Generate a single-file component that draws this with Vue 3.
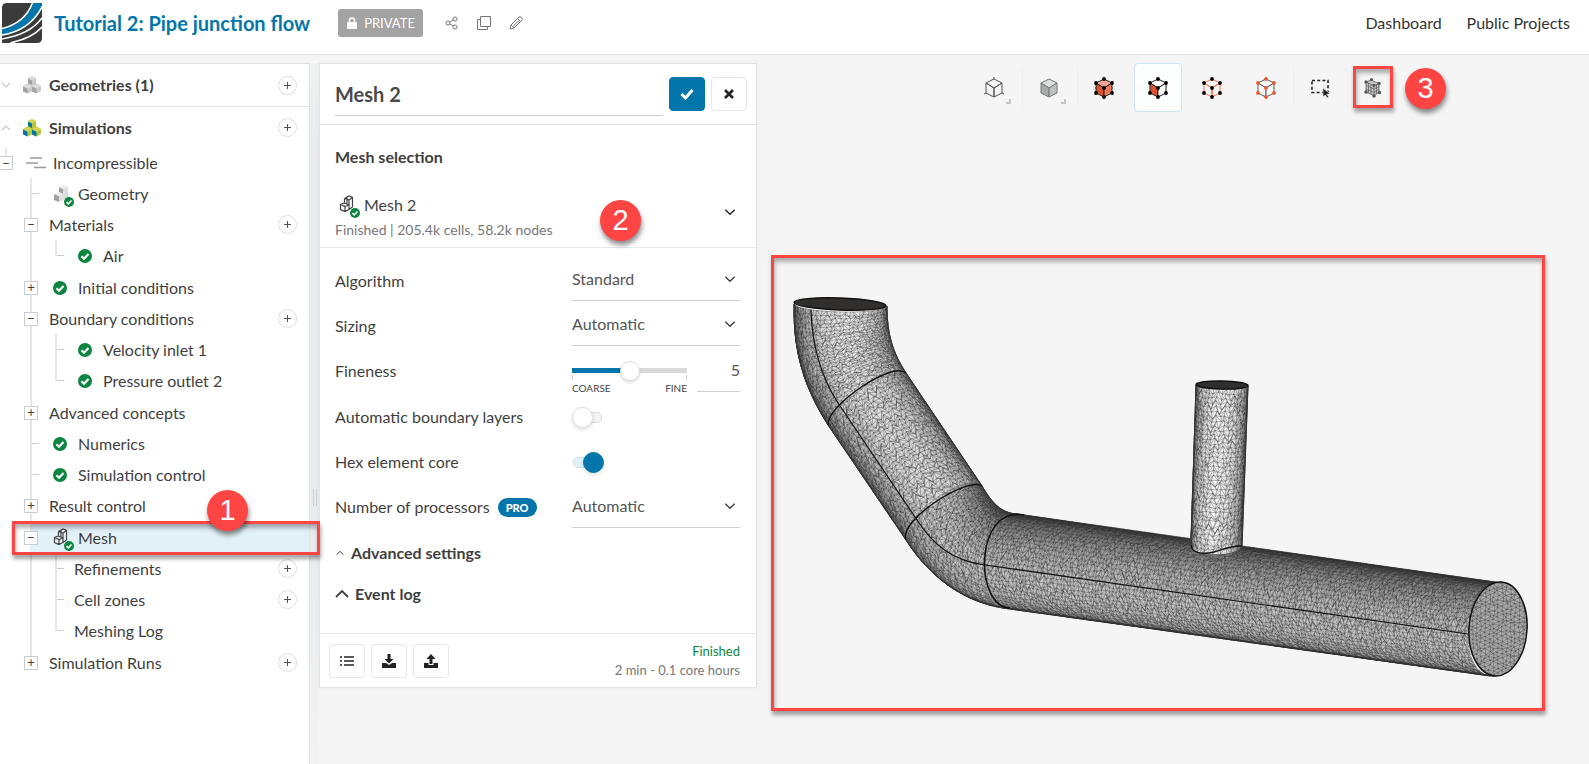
<script setup>
import { ref } from 'vue'

const fineness = ref(5)
const meshName = ref('Mesh 2')
const boundaryLayers = ref(false)
const hexCore = ref(true)

const tree = [
  { label: 'Geometry', icon: 'solid' },
  {
    label: 'Materials', box: '-', add: true,
    children: [{ label: 'Air', icon: 'check' }],
  },
  { label: 'Initial conditions', box: '+', icon: 'check' },
  {
    label: 'Boundary conditions', box: '-', add: true,
    children: [
      { label: 'Velocity inlet 1', icon: 'check' },
      { label: 'Pressure outlet 2', icon: 'check' },
    ],
  },
  { label: 'Advanced concepts', box: '+' },
  { label: 'Numerics', icon: 'check' },
  { label: 'Simulation control', icon: 'check' },
  { label: 'Result control', box: '+' },
  {
    label: 'Mesh', box: '-', icon: 'mesh', active: true,
    children: [
      { label: 'Refinements', add: true },
      { label: 'Cell zones', add: true },
      { label: 'Meshing Log' },
    ],
  },
  { label: 'Simulation Runs', box: '+', add: true },
]

const tools = [
  { id: 'view', label: 'View cube', corner: true },
  { id: 'solid', label: 'Render mode', corner: true, sep: true, wide: true },
  { id: 'volumes', label: 'Select volumes', sep: true, wide: true },
  { id: 'faces', label: 'Select faces', active: true },
  { id: 'edges', label: 'Select edges' },
  { id: 'nodes', label: 'Select vertices' },
  { id: 'box', label: 'Box selection', sep: true },
  { id: 'clip', label: 'Mesh clip', sep: true, marked: true },
]
const corners = [[12, 3], [4, 7], [20, 7], [12, 12], [4, 17], [20, 17], [12, 21]]

/* Surface mesh of the pipe: every segment is swept between an outer and an inner silhouette curve. */
let seed = 7
const rand = () => {
  seed = (seed * 16807) % 2147483647
  return seed / 2147483647 - 0.5
}
const bez = (p, t) => {
  const s = 1 - t
  const w = [s * s * s, 3 * s * s * t, 3 * s * t * t, t * t * t]
  return [0, 1].map((k) => p.reduce((a, q, i) => a + w[i] * q[k], 0))
}
const line = (a, b) => [0, 1, 2, 3].map((i) => [a[0] + ((b[0] - a[0]) * i) / 3, a[1] + ((b[1] - a[1]) * i) / 3])
const point = (s, u, v) => {
  const o = bez(s.outer, u)
  const i = bez(s.inner, u)
  const c = Math.cos(v * Math.PI)
  const h = Math.sin(v * Math.PI)
  return [0, 1].map((k) => (o[k] + i[k]) / 2 + ((o[k] - i[k]) / 2) * c + h * (s.b0[k] + (s.b1[k] - s.b0[k]) * u))
}
const fmt = (p) => p[0].toFixed(1) + ' ' + p[1].toFixed(1)

/* `across` staggers the lattice around the pipe instead of along it. */
const segments = [
  { outer: [[794, 304], [793, 355], [806, 390], [828, 425]], inner: [[887, 306], [887, 335], [893, 353], [906, 373]], b0: [0, 7], b1: [-8, -13], nu: 26, nv: 30, light: 236, peak: 0.55 },
  { outer: line([828, 425], [906, 540]), inner: line([906, 373], [982, 486]), b0: [-8, -13], b1: [-9, -14], nu: 32, nv: 30, light: 222, peak: 0.52 },
  { outer: [[906, 540], [930, 578], [965, 602], [1007, 608]], inner: [[982, 486], [992, 503], [1001, 513], [1017, 514]], b0: [-9, -14], b1: [-27, 4], nu: 24, nv: 32, light: 200, peak: 0.48, across: true },
  { outer: line([1007, 608], [1494, 676]), inner: line([1017, 514], [1502, 583]), b0: [-27, 4], b1: [-29, 3], nu: 140, nv: 32, light: 196, peak: 0.42, across: true },
]
const branch = { outer: line([1196, 385], [1191, 544]), inner: line([1248, 386], [1242, 546]), b0: [0, 4], b1: [-4, 9], nu: 36, nv: 18, light: 244, peak: 0.5 }

function build(s) {
  const strips = []
  const n = 20
  for (let k = 0; k < n; k++) {
    const pts = []
    for (let i = 0; i <= 16; i++) pts.push(fmt(point(s, i / 16, k / n)))
    for (let i = 16; i >= 0; i--) pts.push(fmt(point(s, i / 16, (k + 1) / n)))
    const d = Math.abs((k + 0.5) / n - s.peak) * 2
    const g = Math.round(s.light - Math.pow(d, 1.8) * (s.light - 80))
    strips.push({ d: 'M' + pts.join('L') + 'Z', fill: `rgb(${g},${g},${g})` })
  }
  const grid = []
  for (let i = 0; i <= s.nu; i++) {
    const row = []
    for (let j = 0; j <= s.nv; j++) {
      const edgeU = i === 0 || i === s.nu
      const edgeV = j === 0 || j === s.nv
      const stagger = (s.across ? i : j) % 2 ? 0.25 : -0.25
      const u = (i + (edgeU ? 0 : rand() * 0.7 + (s.across ? 0 : stagger))) / s.nu
      const v = (j + (edgeV ? 0 : rand() * 0.7 + (s.across ? stagger : 0))) / s.nv
      row.push(fmt(point(s, u, v)))
    }
    grid.push(row)
  }
  let wires = ''
  for (let i = 0; i < s.nu; i++) {
    for (let j = 0; j <= s.nv; j++) {
      wires += `M${grid[i][j]}L${grid[i + 1][j]}`
      if (j < s.nv) {
        wires += `M${grid[i][j]}L${grid[i][j + 1]}`
        const odd = (s.across ? i : j) % 2
        wires += odd ? `M${grid[i + 1][j]}L${grid[i][j + 1]}` : `M${grid[i][j]}L${grid[i + 1][j + 1]}`
      }
    }
  }
  return { strips, wires }
}
const pipe = segments.map(build)
const riser = build(branch)

/* Triangulated disc that closes the end of the main pipe. */
let capWires = ''
{
  const cols = 16
  const rows = 24
  const g = []
  for (let i = 0; i <= rows; i++) {
    const r = []
    for (let j = 0; j <= cols; j++) {
      r.push(fmt([1464 + ((j + rand() * 0.6) * 68) / cols, 578 + ((i + rand() * 0.6 + (j % 2 ? 0.5 : 0)) * 104) / rows]))
    }
    g.push(r)
  }
  for (let i = 0; i < rows; i++) {
    for (let j = 0; j < cols; j++) {
      capWires += `M${g[i][j]}L${g[i + 1][j]}M${g[i][j]}L${g[i][j + 1]}`
      capWires += j % 2 ? `M${g[i][j]}L${g[i + 1][j + 1]}` : `M${g[i + 1][j]}L${g[i][j + 1]}`
    }
  }
}
</script>

<template>
  <div class="app">
    <header class="topbar">
      <svg class="logo" viewBox="0 0 40 40" aria-hidden="true">
        <defs><clipPath id="logo-clip"><path d="M5 0H40V35Q40 40 35 40H0V5Q0 0 5 0Z" /></clipPath></defs>
        <g clip-path="url(#logo-clip)">
          <rect width="40" height="40" fill="#3b3b3b" />
          <path d="M0 26C15 22 25 14 31 0H40V4C32 20 18 30 0 33Z" fill="#0276ab" />
          <path d="M0 25.500C15 22 25 14 30.500 0M0 32C18 29 32 20 40.500 3M0 36C18 33 32 26 40 15M8 40C22 37 33 32 40 24" fill="none" stroke="#fff" stroke-width="1.600" />
        </g>
      </svg>
      <h1>Tutorial 2: Pipe junction flow</h1>
      <span class="private">
        <svg width="10" height="12" viewBox="0 0 10 12"><path d="M2.500 6V3.500a2.500 2.500 0 0 1 5 0V6" fill="none" stroke="#fff" stroke-width="1.600" /><rect y="5" width="10" height="7" rx="1" fill="#fff" /></svg>
        PRIVATE
      </span>
      <div class="actions">
        <button type="button" aria-label="Share"><svg width="14" height="14" viewBox="0 0 14 14"><g fill="none" stroke="#777"><circle cx="3" cy="7" r="2" /><circle cx="10" cy="3" r="2" /><circle cx="10" cy="11" r="2" /><path d="M5 6l3-2M5 8l3 2" /></g></svg></button>
        <button type="button" aria-label="Copy"><svg width="14" height="14" viewBox="0 0 14 14"><path d="M3.500.5h10v10h-10zM3.500 3.500h-3v10h10v-3" fill="none" stroke="#777" /></svg></button>
        <button type="button" aria-label="Rename"><svg width="14" height="14" viewBox="0 0 14 14"><path d="M1 13l1-4L10 1q1-.8 2 .2l.8.8q1 1 .2 2L5 12zM2 9l3 3M8.500 2.500l3 3M4 10.500l6-6" fill="none" stroke="#777" /></svg></button>
      </div>
      <nav>
        <a href="#dashboard">Dashboard</a>
        <a href="#projects">Public Projects</a>
      </nav>
    </header>

    <svg class="defs" aria-hidden="true">
      <symbol id="ok" viewBox="0 0 14 14"><circle cx="7" cy="7" r="7" fill="#0d8540" /><path d="M3.500 7.200l2.500 2.500 4.500-4.800" fill="none" stroke="#fff" stroke-width="2.200" /></symbol>
      <symbol id="chev" viewBox="0 0 12 12"><path d="M2 4l4 4 4-4" fill="none" stroke="currentColor" stroke-width="1.200" /></symbol>
      <symbol id="cubes" viewBox="0 0 18 18">
        <path d="M9 0l4 2v5l5 3v5l-4.500 2.500L9 15.500 4.500 17.500 0 15v-5l5-3V2z" fill="var(--r)" />
        <path d="M5 2.500l4 2V9L5 7zM0 10.500l4.500 2v5L0 15.500zM9 10.500l4.500 2v5L9 15.500z" fill="var(--l)" />
        <path d="M9 0l4 2-4 2.200L5 2zM4.500 8L9 10.200 4.500 12.500 0 10zM13.500 8l4.500 2-4.500 2.500L9 10.200z" fill="var(--t)" />
      </symbol>
      <symbol id="part" viewBox="0 0 22 22">
        <path d="M6 4l4-2 5 2v11l-9 4-5-2v-6l5-2z" fill="#dddede" />
        <path d="M6 4l4 2v5l-4-2zM1 11l5 2v6l-5-2z" fill="#a0a2a4" />
        <path d="M6 4l4-2 5 2-5 2zM1 11l5-2 4 2-4 2z" fill="#efefef" />
      </symbol>
      <symbol id="wire" viewBox="0 0 22 22">
        <path d="M5.500 4.500L10 2l3.500 1.500V13M5.500 4.500L10 6l3.500-2.500M5.500 4.500V9L1.500 10.500v5L6 17.500l4-2V11L6 12.500l-4.500-2M6 12.500v5M10 6v5L5.500 9M13.500 13L10 15.500M8 3.500v7" fill="none" stroke="#444" stroke-width="1.200" />
      </symbol>
    </svg>

    <main>
      <aside class="sidebar">
        <div class="group geometries">
          <svg class="fold" width="12" height="12"><use href="#chev" /></svg>
          <svg class="cubes gray" width="18" height="18"><use href="#cubes" /></svg>
          <h2>Geometries (1)</h2>
          <button type="button" class="add" aria-label="Add geometry"></button>
        </div>
        <div class="group">
          <svg class="fold up" width="12" height="12"><use href="#chev" /></svg>
          <svg class="cubes colour" width="18" height="18"><use href="#cubes" /></svg>
          <h2>Simulations</h2>
          <button type="button" class="add" aria-label="Add simulation"></button>
        </div>
        <div class="root">
          <button type="button" class="box" aria-label="Toggle Incompressible">−</button>
          <svg width="20" height="14" viewBox="0 0 20 14"><path d="M4 2h12M0 7h12M8 11.500h12" stroke="#999" stroke-width="1.400" /></svg>
          <span>Incompressible</span>
        </div>
        <ul class="tree">
          <li v-for="n in tree" :key="n.label">
            <div class="row" :class="{ active: n.active }">
              <button v-if="n.box" type="button" class="box" :aria-label="'Toggle ' + n.label">{{ n.box === '-' ? '−' : '+' }}</button>
              <i v-else class="tick"></i>
              <span v-if="n.icon" class="icon">
                <svg v-if="n.icon === 'check'" width="14" height="14"><use href="#ok" /></svg>
                <template v-else>
                  <svg width="22" height="22"><use :href="n.icon === 'mesh' ? '#wire' : '#part'" /></svg>
                  <svg class="mini" width="10" height="10"><use href="#ok" /></svg>
                </template>
              </span>
              <span class="label">{{ n.label }}</span>
              <button v-if="n.add" type="button" class="add" :aria-label="'Add to ' + n.label"></button>
              <template v-if="n.active"><span class="outline"></span><span class="marker m1">1</span></template>
            </div>
            <ul v-if="n.children" class="children">
              <li v-for="c in n.children" :key="c.label" class="row">
                <i class="tick"></i>
                <span v-if="c.icon" class="icon"><svg width="14" height="14"><use href="#ok" /></svg></span>
                <span class="label">{{ c.label }}</span>
                <button v-if="c.add" type="button" class="add" :aria-label="'Add to ' + c.label"></button>
              </li>
            </ul>
          </li>
        </ul>
      </aside>

      <div class="gutter"><i class="grip"></i></div>

      <section class="panel">
        <div class="panel-head">
          <input v-model="meshName" class="name" aria-label="Mesh name" />
          <button type="button" class="btn primary" aria-label="Apply"><svg width="14" height="12" viewBox="0 0 14 12"><path d="M1.500 6l4 4 7-8" fill="none" stroke="#fff" stroke-width="3" /></svg></button>
          <button type="button" class="btn" aria-label="Close"><svg width="10" height="10" viewBox="0 0 10 10"><path d="M1 1l8 8M9 1L1 9" stroke="#222" stroke-width="2.600" /></svg></button>
        </div>
        <div class="selection">
          <h3>Mesh selection</h3>
          <button type="button" class="mesh-pick">
            <span class="pick-name">
              <span class="icon"><svg width="22" height="22"><use href="#wire" /></svg><svg class="mini" width="10" height="10"><use href="#ok" /></svg></span>
              Mesh 2
            </span>
            <small>Finished | 205.4k cells, 58.2k nodes</small>
            <svg class="pick-chev" width="14" height="14"><use href="#chev" /></svg>
          </button>
          <span class="marker m2">2</span>
        </div>
        <form class="form" @submit.prevent>
          <div class="field">
            <label for="algorithm">Algorithm</label>
            <span class="select"><select id="algorithm"><option>Standard</option></select><svg width="14" height="14"><use href="#chev" /></svg></span>
          </div>
          <div class="field">
            <label for="sizing">Sizing</label>
            <span class="select"><select id="sizing"><option>Automatic</option></select><svg width="14" height="14"><use href="#chev" /></svg></span>
          </div>
          <div class="field tall">
            <label for="fineness">Fineness</label>
            <span class="fine">
              <span class="slider">
                <input id="fineness" v-model="fineness" type="range" min="0" max="10" />
                <span class="ends"><span>COARSE</span><span>FINE</span></span>
              </span>
              <input v-model="fineness" class="value" aria-label="Fineness value" />
            </span>
          </div>
          <div class="field">
            <label for="layers">Automatic boundary layers</label>
            <input id="layers" v-model="boundaryLayers" type="checkbox" class="switch" />
          </div>
          <div class="field">
            <label for="hex">Hex element core</label>
            <input id="hex" v-model="hexCore" type="checkbox" class="switch" />
          </div>
          <div class="field tall">
            <label for="procs">Number of processors <b class="pro">PRO</b></label>
            <span class="select"><select id="procs"><option>Automatic</option></select><svg width="14" height="14"><use href="#chev" /></svg></span>
          </div>
          <button type="button" class="section"><svg class="up" width="10" height="12"><use href="#chev" /></svg>Advanced settings</button>
          <button type="button" class="section log"><svg class="up" width="18" height="18"><use href="#chev" /></svg>Event log</button>
        </form>
        <footer>
          <button type="button" class="btn" aria-label="Event list"><svg width="14" height="12" viewBox="0 0 14 12"><path d="M0 2h2M4 2h10M0 6h2M4 6h10M0 10h2M4 10h10" stroke="#222" stroke-width="1.700" /></svg></button>
          <button type="button" class="btn" aria-label="Download"><svg width="14" height="14" viewBox="0 0 14 14"><path d="M0 9h4l3 2 3-2h4v5H0z" fill="#222" /><path d="M5.500 0h3v5h3L7 9.500 2.500 5h3z" fill="#222" /></svg></button>
          <button type="button" class="btn" aria-label="Upload"><svg width="14" height="14" viewBox="0 0 14 14"><path d="M0 9h4.500v2h5V9H14v5H0z" fill="#222" /><path d="M5.500 10h3V5h3L7 0 2.500 5h3z" fill="#222" /></svg></button>
          <p><span class="done">Finished</span><span>2 min - 0.1 core hours</span></p>
        </footer>
      </section>

      <section class="viewer">
        <div class="toolbar">
          <button v-for="t in tools" :key="t.id" type="button" :aria-label="t.label" :class="{ on: t.active, sep: t.sep, wide: t.wide }">
            <svg v-if="t.id === 'box'" width="24" height="24" viewBox="0 0 24 24">
              <path d="M4 4.500h16v12H4z" fill="none" stroke="#222" stroke-width="1.600" stroke-dasharray="3 2.200" />
              <path d="M15 12v9l2.300-2 1.700 3 1.600-.8-1.600-3 3-.4z" fill="#222" stroke="#f5f5f5" stroke-width=".6" />
            </svg>
            <svg v-else-if="t.id === 'clip'" width="24" height="24" viewBox="0 0 24 24">
              <path d="M4 6l5-2 8 4v8l-5 4-8-4z" fill="#c4c4c4" />
              <path d="M4 6l8 3.500 5-2M12 9.500V20M4 6v10l8 4 5-4V7.500L9 4zM4 9.500l8 3.500 5-2.500M4 13l8 3.500 5-3.500M6.500 7v10M9 8.200V18.500M14.500 8.500v9.500" fill="none" stroke="#666" stroke-width=".8" />
              <g fill="#555"><circle cx="4" cy="6" r="1.700" /><circle cx="9.500" cy="3.500" r="1.500" /><circle cx="17" cy="7.500" r="1.700" /><circle cx="4" cy="16" r="1.700" /><circle cx="12" cy="20" r="1.700" /><circle cx="17.500" cy="16.500" r="1.700" /><circle cx="12" cy="9.500" r="1.400" /></g>
            </svg>
            <svg v-else width="24" height="24" viewBox="0 0 24 24" :class="['cube', t.id]">
              <path class="top" d="M12 3l8 4-8 5-8-5z" />
              <path class="left" d="M4 7l8 5v9l-8-4z" />
              <path class="right" d="M20 7l-8 5v9l8-4z" />
              <path v-if="t.id === 'view'" d="M12 3V1M4 17l-2 1M20 17l2 1" />
              <g v-if="['volumes', 'faces', 'edges', 'nodes'].includes(t.id)"><circle v-for="(c, i) in corners" :key="i" :cx="c[0]" :cy="c[1]" r="1.900" /></g>
            </svg>
            <i v-if="t.corner" class="corner"></i>
            <template v-if="t.marked"><span class="outline"></span><span class="marker m3">3</span></template>
          </button>
        </div>
        <figure class="model">
          <svg viewBox="774 258 768 450" role="img" aria-label="Pipe junction mesh">
            <defs><clipPath id="cap"><ellipse cx="1498" cy="629" rx="29" ry="47" transform="rotate(4 1498 629)" /></clipPath></defs>
            <g v-for="(s, i) in pipe" :key="i">
              <path v-for="(p, k) in s.strips" :key="k" :d="p.d" :fill="p.fill" :stroke="p.fill" stroke-width=".5" />
              <path :d="s.wires" class="wires" />
            </g>
            <path v-for="(p, k) in riser.strips" :key="k" :d="p.d" :fill="p.fill" :stroke="p.fill" stroke-width=".5" />
            <path :d="riser.wires" class="wires" />
            <g clip-path="url(#cap)"><rect x="1460" y="575" width="75" height="110" fill="#acacac" /><path :d="capWires" class="wires" /></g>
            <g class="feature">
              <path d="M794 304C793 355 806 390 828 425L906 540C930 578 965 602 1007 608L1494 676M887 306C887 335 893 353 906 373L982 486C992 503 1001 513 1017 514L1192 540M1242 547L1502 583" stroke-width="1" class="rim" />
              <path d="M1196 385L1191 545M1248 386L1242 546" class="rim" />
              <path d="M811 310C812 345 820 375 838 403L915 517C934 547 954 561 985 565L1468 634" class="seam" />
              <path d="M828 425C826 406 893 360 906 373M906 540C898 520 968 476 982 486M1024 515C974 505 974 607 1010 608M1191 545C1192 553 1202 555 1214 552C1225 549 1232 545 1242 546" />
              <ellipse cx="1498" cy="629" rx="29" ry="47" transform="rotate(4 1498 629)" />
              <ellipse cx="840" cy="304" rx="46" ry="6" transform="rotate(2 840 304)" fill="#302f2e" />
              <ellipse cx="1222" cy="385" rx="26" ry="4" transform="rotate(1 1222 385)" fill="#302f2e" />
            </g>
          </svg>
        </figure>
      </section>
    </main>
  </div>
</template>

<style>
body { margin: 0; background: #f5f5f5; }
</style>

<style scoped>
* { box-sizing: border-box; }
.app { min-height: 100vh; display: flex; flex-direction: column; font: 16px/20px Lato, "Open Sans", sans-serif; color: #3f3f3f; background: #f5f5f5; overflow: hidden; }
button { font: inherit; color: inherit; padding: 0; border: 0; background: none; cursor: pointer; }
input, select { font: inherit; color: inherit; margin: 0; }
svg { display: block; flex: none; }
.defs { position: absolute; width: 0; height: 0; }
h1, h2, h3, p, ul, figure { margin: 0; padding: 0; list-style: none; }

.topbar { height: 55px; flex: none; display: flex; align-items: center; padding: 0 19px 8px 2px; background: #fff; border-bottom: 1px solid #e1e2e3; }
.logo { width: 40px; height: 40px; }
h1 { margin-left: 12px; font-size: 20px; line-height: 26px; font-weight: 700; color: #0276ab; white-space: nowrap; }
.private { margin-left: 28px; height: 28px; padding: 0 8px 0 9px; display: flex; align-items: center; gap: 7px; border-radius: 3px; background: #a3a3a3; color: #fff; font-size: 13px; }
.actions { display: flex; gap: 18px; margin-left: 22px; }
nav { margin-left: auto; display: flex; gap: 25px; }
nav a { color: #333; text-decoration: none; }

main { flex: 1; display: flex; align-items: flex-start; padding-top: 8px; }
.sidebar { width: 310px; flex: none; align-self: stretch; background: #fff; border: 1px solid #e0e2e3; border-width: 1px 1px 0 0; }
.group { display: flex; align-items: center; height: 41px; padding-right: 12px; }
.geometries { border-bottom: 1px solid #e3e4e5; height: 43px; }
.group h2 { flex: 1; font-size: 16px; line-height: 20px; font-weight: 700; }
.fold { color: #c4c6c8; }
.up { transform: rotate(180deg); }
.cubes { margin: 0 8px 0 11px; }
.gray { --t: #dededf; --l: #a2a4a6; --r: #c9cacc; }
.colour { --t: #d3d65a; --l: #0276ab; --r: #b9c63a; }
.add { position: relative; width: 19px; height: 19px; flex: none; border: 1px solid #dcdedf; border-radius: 50%; background: #fff; }
.add::before, .add::after { content: ""; position: absolute; left: 5px; top: 8px; width: 7px; height: 1px; background: #555; }
.add::after { left: 8px; top: 5px; width: 1px; height: 7px; }
.box { position: relative; width: 14px; height: 14px; flex: none; border: 1px solid #c8cdd0; background: #fff; font-size: 13px; line-height: 11px; text-align: center; }
.root { position: relative; display: flex; align-items: center; height: 30px; }
.root::before { content: ""; position: absolute; left: 5px; top: 0; width: 2px; height: 8px; background: #e4e6e7; }
.root .box { margin: 0 13px 0 -1px; }
.root span { margin-left: 7px; }
.tree { position: relative; }
.tree::before { content: ""; position: absolute; left: 30px; top: 0; bottom: 16px; width: 2px; background: #e4e6e7; }
.row { position: relative; display: flex; align-items: center; height: 31px; padding: 0 12px 0 24px; }
.row .box { margin-right: 1px; }
.tick { width: 15px; height: 1px; border-left: 8px solid transparent; background: #c8cdd0; background-clip: padding-box; }
.label { margin-left: 10px; flex: 1; }
.icon { position: relative; width: 25px; margin: 0 -10px 0 14px; }
.mini { position: absolute; left: 11px; top: 14px; }
.active { height: 32px; padding-top: 1px; background: linear-gradient(90deg, transparent 30px, #e2f1f8 30px); }
.children { position: relative; padding-bottom: 1px; }
.children::before { content: ""; position: absolute; left: 55px; top: 0; bottom: 16px; width: 2px; background: #e4e6e7; }
.children .row { padding-left: 49px; }

.outline { position: absolute; border: 3px solid #ff4444; box-shadow: 1px 4px 4px rgba(0, 0, 0, .35), inset 1px 4px 4px rgba(0, 0, 0, .3); }
.active .outline { left: 12px; right: -11px; top: 0; bottom: -2px; z-index: 2; }
.marker { position: absolute; z-index: 3; width: 41px; height: 41px; border-radius: 50%; background: #ff4444; color: #fff; font: 29px/41px "Liberation Sans", Arial, sans-serif; text-align: center; box-shadow: 1px 4px 5px rgba(0, 0, 0, .45); }
.m1 { left: 207px; top: -31px; }
.m2 { left: 280px; bottom: 6px; }
.m3 { left: 54px; top: 4px; }

.gutter { width: 9px; flex: none; align-self: stretch; background: linear-gradient(#f1f2f2, #e9ebed 80px, #e9ebed 480px, #f3f3f3); display: flex; justify-content: center; }
.grip { width: 4px; height: 17px; margin-top: 426px; border: 1px solid #cdd0d2; border-width: 0 1px; }

.panel { width: 438px; flex: none; background: #fff; border: 1px solid #e1e3e4; box-shadow: 0 0 6px rgba(0, 0, 0, .04); }
.panel-head { display: flex; gap: 6px; align-items: flex-start; height: 61px; padding: 13px 9px 0 15px; border-bottom: 1px solid #e1e3e4; }
.name { flex: 1; min-width: 0; height: 39px; padding: 0 0 4px; border: 0; border-bottom: 1px solid #ccd0d2; font-size: 20px; font-weight: 700; color: #4a4a4a; background: none; }
.btn { width: 36px; height: 34px; flex: none; display: flex; align-items: center; justify-content: center; border: 1px solid #e4e6e7; border-radius: 4px; background: #fff; }
.primary { background: #0276ab; border-color: #0276ab; }
.selection { position: relative; height: 123px; padding: 22px 16px 0 15px; border-bottom: 1px solid #e8e9ea; }
h3 { font-size: 16px; line-height: 20px; font-weight: 700; }
.mesh-pick { position: relative; display: block; width: 100%; margin-top: 26px; text-align: left; }
.pick-name { display: flex; align-items: center; height: 24px; }
.pick-name .icon { margin: 0 0 0 4px; }
.mesh-pick small { display: block; margin-top: 3px; font-size: 14px; line-height: 20px; color: #777; }
.pick-chev { position: absolute; right: 3px; top: 12px; color: #222; }

.form { padding: 10px 16px 0 15px; }
.field { display: flex; align-items: center; justify-content: space-between; height: 45px; }
.tall { height: 46px; }
.field > :last-child { width: 168px; flex: none; }
.select { position: relative; }
select { appearance: none; display: block; width: 100%; height: 41px; padding: 0 24px 2px 0; border: 0; border-bottom: 1px solid #ccd0d2; border-radius: 0; background: none; color: #555; }
.select svg { position: absolute; right: 3px; top: 12px; pointer-events: none; }
.fine { display: flex; gap: 10px; height: 41px; }
.slider { width: 115px; }
input[type="range"] { appearance: none; display: block; width: 100%; height: 20px; margin-top: 10px; background: linear-gradient(90deg, #0276ab 50%, #d9d9d9 50%) center / 100% 5px no-repeat; }
input[type="range"]::-webkit-slider-thumb { appearance: none; width: 20px; height: 20px; border-radius: 50%; background: #fff; border: 1px solid #dcdcdc; box-shadow: 0 2px 3px rgba(0, 0, 0, .12); }
.ends { display: flex; justify-content: space-between; margin-top: -6px; height: 5px; border: 1px solid #d0d0d0; border-width: 0 1px; font-size: 10px; line-height: 14px; }
.ends span { margin: 6px -1px 0; }
.value { width: 43px; padding: 0 0 2px; border: 0; border-bottom: 1px solid #ccd0d2; background: none; text-align: right; color: #555; }
.field > .switch { appearance: none; position: relative; width: 30px; height: 19px; margin-right: 138px; }
.switch::before { content: ""; position: absolute; left: 1px; right: 0; top: 5px; height: 9px; border: 1px solid #dcdcdc; border-radius: 5px; background: #f3f3f3; }
.switch::after { content: ""; position: absolute; left: 0; top: 0; width: 19px; height: 19px; border: 1px solid #dcdcdc; border-radius: 50%; background: #fff; box-shadow: 0 2px 4px rgba(0, 0, 0, .12); }
.switch:checked::before { background: #dff0f8; border-color: #d3dfe5; }
.switch:checked::after { left: 11px; background: #0276ab; border-color: #0276ab; }
.pro { display: inline-block; margin-left: 4px; padding: 0 8px; border-radius: 10px; background: #0276ab; color: #fff; font-size: 11px; line-height: 19px; font-weight: 900; vertical-align: 1px; }
.section { display: flex; align-items: center; gap: 6px; height: 46px; font-weight: 700; }
.log { height: 36px; gap: 4px; margin-left: -2px; }
footer { display: flex; gap: 6px; align-items: center; height: 54px; margin-top: 21px; padding: 0 16px 0 9px; border-top: 1px solid #e1e3e4; }
footer p { margin-left: auto; display: flex; flex-direction: column; text-align: right; font-size: 13px; line-height: 19px; color: #777; }
.done { color: #0d8540; }

.viewer { flex: 1; min-width: 0; padding: 0 44px 0 14px; }
.toolbar { display: flex; justify-content: flex-end; gap: 6px; margin-right: 147px; }
.toolbar button { position: relative; width: 48px; height: 49px; flex: none; display: flex; align-items: center; justify-content: center; border: 1px solid transparent; border-radius: 4px; }
.toolbar .wide { margin-left: 1px; }
.toolbar .on { background: #fcfdfd; border-color: #cfe5f0; }
.toolbar .sep::before { content: ""; position: absolute; left: -4px; top: 4px; bottom: 4px; width: 1px; background: #eeeeee; }
.corner { position: absolute; right: 6px; bottom: 7px; width: 5px; height: 5px; border: 2px solid #c5c5c5; border-width: 0 2px 2px 0; }
.toolbar .outline { left: 2px; right: 4px; top: 2px; bottom: 3px; }
.cube path { fill: none; stroke: #555; stroke-width: 1; stroke-linejoin: round; }
.solid .top { fill: #dcdede; }
.solid .left { fill: #a9abab; }
.solid .right { fill: #bfc1c1; }
.solid path { stroke: #777; }
.volumes .top { fill: #f0a596; }
.volumes .left, .faces .left { fill: #d9532f; }
.volumes .right { fill: #ee7658; }
.faces .top, .faces .right, .nodes .top, .nodes .left, .nodes .right { fill: #fff; }
.volumes path, .faces path { stroke: #222; }
.edges path { stroke: #f0714f; }
.nodes circle { fill: #e8582f; }
.cube circle { stroke: none; }

.model { margin-top: 143px; border: 3px solid #ff4444; box-shadow: 1px 4px 4px rgba(0, 0, 0, .35), inset 1px 4px 4px rgba(0, 0, 0, .3); }
.model svg { width: 100%; height: auto; }
.wires { fill: none; stroke: #2e2e2e; stroke-width: .5; stroke-opacity: .7; }
.feature { fill: none; stroke: #111; stroke-width: 1.500; }
.rim { stroke: #333; stroke-width: 1; }
.seam { stroke-width: 1.200; }
</style>
